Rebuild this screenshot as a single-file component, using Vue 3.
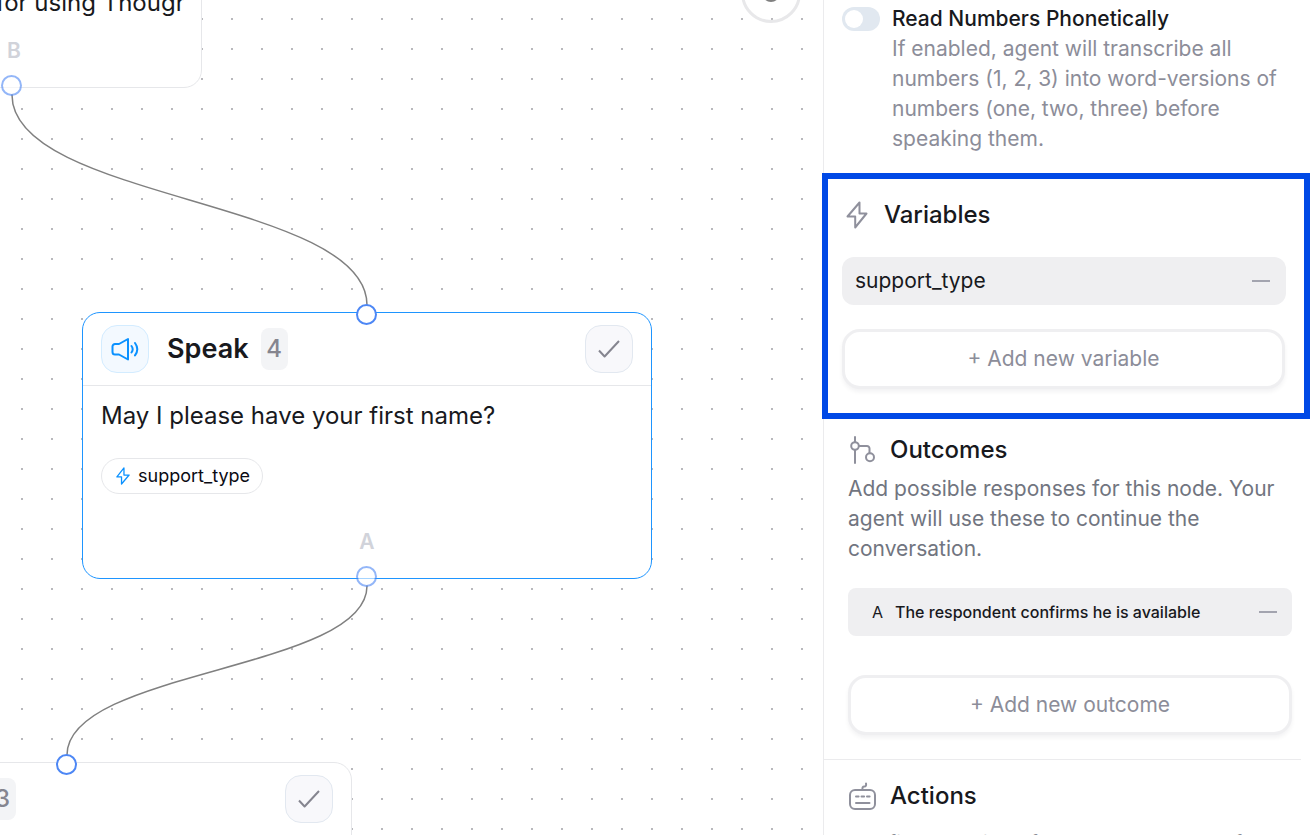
<script setup>
import { ref } from 'vue'

const readPhonetically = ref(false)
const variables = ref(['support_type'])
const outcomes = ref([{ key: 'A', text: 'The respondent confirms he is available' }])
</script>

<template>
  <div class="app">
    <main class="canvas">
      <svg class="edges" aria-hidden="true">
        <path d="M12 95C12 200 367 200 367 305" />
        <path d="M367 586C367 670 67 670 67 755" />
      </svg>

      <button class="zoom-button" aria-label="Recenter">
        <svg width="24" height="24" viewBox="0 0 24 24"><circle cx="12" cy="12" r="8" /></svg>
      </button>

      <article class="node node-intro">
        <p class="node-text clipped">for using Thoughtly</p>
        <span class="port-label">B</span>
        <span class="handle source"></span>
      </article>

      <article class="node node-speak">
        <span class="handle target"></span>
        <header class="node-head">
          <span class="tile tile-blue">
            <svg width="30" height="30" viewBox="0 0 30 30">
              <path d="M2.500 12.500a2.500 2.500 0 0 1 2.500-2.500H9l9-5v20.500L9 20.500H5a2.500 2.500 0 0 1-2.500-2.500z" />
              <path d="M21.500 12q2.400 3.200 0 6.500M25 9q4.600 6.200 0 12.400" />
            </svg>
          </span>
          <h2>Speak</h2>
          <span class="count">4</span>
          <button class="tile tile-check" aria-label="Done">
            <svg width="24" height="24" viewBox="0 0 24 24"><path d="M2 13.500l5.600 6L22 4" /></svg>
          </button>
        </header>
        <div class="node-body">
          <p class="node-text">May I please have your first name?</p>
          <span class="chip">
            <svg width="16" height="18" viewBox="0 0 22 28"><path d="M12.500 1.500L1.500 15.500h7.200v11L20.500 12.500h-8z" /></svg>
            support_type
          </span>
        </div>
        <span class="port-label">A</span>
        <span class="handle source"></span>
      </article>

      <article class="node node-next">
        <span class="handle target"></span>
        <header class="node-head">
          <span class="count">3</span>
          <button class="tile tile-check" aria-label="Done">
            <svg width="24" height="24" viewBox="0 0 24 24"><path d="M2 13.500l5.600 6L22 4" /></svg>
          </button>
        </header>
      </article>
    </main>

    <aside class="panel">
      <section class="setting">
        <input id="phonetic" v-model="readPhonetically" class="switch" type="checkbox" role="switch" />
        <div>
          <label for="phonetic">Read Numbers Phonetically</label>
          <p>If enabled, agent will transcribe all numbers (1, 2, 3) into word-versions of numbers (one, two, three) before speaking them.</p>
        </div>
      </section>

      <section class="variables">
        <h3>
          <svg width="30" height="28" viewBox="0 0 30 28"><path d="M17.500 1.500L5.500 15.500h7.700v11L24.500 12.500h-7z" /></svg>
          Variables
        </h3>
        <div v-for="name in variables" :key="name" class="row">
          <span>{{ name }}</span>
          <button class="remove" aria-label="Remove variable"></button>
        </div>
        <button class="add">+ Add new variable</button>
      </section>

      <section class="outcomes">
        <h3>
          <svg width="28" height="28" viewBox="0 0 28 28">
            <path d="M7 1v5M7 14v13M11 10H19a2.500 2.500 0 0 1 2.500 2.500V17" />
            <circle cx="7" cy="10" r="3.800" />
            <circle cx="22" cy="21.300" r="4" />
          </svg>
          Outcomes
        </h3>
        <p>Add possible responses for this node. Your agent will use these to continue the conversation.</p>
        <div v-for="o in outcomes" :key="o.key" class="row outcome-row">
          <span class="key">{{ o.key }}</span>
          <span>{{ o.text }}</span>
          <button class="remove" aria-label="Remove outcome"></button>
        </div>
        <button class="add">+ Add new outcome</button>
      </section>

      <section class="actions">
        <h3>
          <svg width="28" height="28" viewBox="0 0 28 28">
            <path d="M14.500 7.500Q14 4.500 16.300 4.500T18 1.500" />
            <rect x="2" y="8" width="25" height="19" rx="5" />
            <path d="M8 14.500h2.600M13.500 14.500h2.600M19 14.500h2.600M8 21h13.500" />
          </svg>
          Actions
        </h3>
        <p>Configure actions for your agent to perform</p>
      </section>
    </aside>
  </div>
</template>

<style>
body {
  margin: 0;
}
</style>

<style scoped>
.app {
  display: grid;
  grid-template-columns: minmax(0, 1fr) 488px;
  height: 100vh;
  overflow: hidden;
  background: #fff;
  color: #18191d;
  font-family: Inter, "Liberation Sans", sans-serif;
}
h2, h3, p {
  margin: 0;
}
button {
  font: inherit;
  padding: 0;
  border: 0;
  cursor: pointer;
}
svg {
  fill: none;
  stroke: currentColor;
  stroke-width: 2;
  stroke-linecap: round;
  stroke-linejoin: round;
  flex: none;
}

.canvas {
  position: relative;
  overflow: hidden;
  background: radial-gradient(circle, #b8b8bc 0 1px, transparent 1px) 7px 4px / 30px 30px;
}
.edges {
  position: absolute;
  inset: 0;
  width: 100%;
  height: 100%;
  color: #808080;
}
.edges path {
  stroke-width: 1.500;
}
.zoom-button {
  position: absolute;
  top: -37px;
  right: 22px;
  display: grid;
  place-items: center;
  width: 60px;
  height: 60px;
  border: 3px solid #e8e8ea;
  border-radius: 50%;
  background: transparent;
  color: #808080;
}

.node {
  position: absolute;
  box-sizing: border-box;
  border: 1px solid #e6e7ea;
  border-radius: 18px;
  background: #fff;
}
.node-intro {
  left: -22px;
  top: -30px;
  width: 224px;
  height: 118px;
  padding: 17px;
}
.node-speak {
  left: 82px;
  top: 312px;
  width: 570px;
  height: 267px;
  border-color: #1e95ff;
}
.node-next {
  left: -30px;
  top: 762px;
  width: 382px;
  height: 267px;
}
.node-head {
  display: flex;
  align-items: center;
  height: 72px;
  padding: 0 18px;
  border-bottom: 1px solid #e6e7ea;
}
.tile {
  display: grid;
  place-items: center;
  box-sizing: border-box;
  width: 48px;
  height: 48px;
  border: 1px solid #e2e8f0;
  border-radius: 16px;
}
.tile-blue {
  border-color: #d3ecff;
  background: #f3f9ff;
  color: #0a91ff;
}
.tile-check {
  margin-left: auto;
  background: #f8f8fb;
  color: #85858f;
}
.tile-check svg {
  stroke-linecap: butt;
}
h2 {
  margin-left: 18px;
  font-size: 27px;
  font-weight: 600;
  line-height: 30px;
}
.count {
  display: grid;
  place-items: center;
  width: 27px;
  height: 42px;
  border-radius: 8px;
  background: #f3f4f6;
  color: #85858f;
  font-size: 24px;
  font-weight: 500;
  line-height: 30px;
}
h2 + .count {
  margin-left: 12px;
}
.node-body {
  display: flex;
  flex-direction: column;
  align-items: flex-start;
  gap: 27px;
  padding: 15px 18px;
}
.node-text {
  font-size: 24px;
  line-height: 30px;
}
.clipped {
  overflow: hidden;
  white-space: nowrap;
}
.chip {
  display: flex;
  align-items: center;
  gap: 7px;
  box-sizing: border-box;
  height: 36px;
  padding: 0 12px 0 13px;
  border: 1px solid #e6e7ea;
  border-radius: 18px;
  color: #0b0b14;
  font-size: 18px;
  line-height: 24px;
}
.chip svg {
  color: #0a91ff;
}
.port-label {
  position: absolute;
  bottom: 21px;
  left: 0;
  right: 0;
  color: #d1d3da;
  font-size: 21px;
  font-weight: 600;
  line-height: 30px;
  text-align: center;
}
.handle {
  position: absolute;
  left: 50%;
  box-sizing: border-box;
  width: 21px;
  height: 21px;
  margin-left: -11px;
  border: 2px solid #4d87f5;
  border-radius: 50%;
  background: #fff;
}
.target {
  top: -9px;
}
.source {
  bottom: -9px;
  opacity: 0.600;
}
.node-intro .port-label {
  left: 28px;
  right: auto;
}
.node-intro .handle {
  left: 33px;
}
.node-next .handle {
  left: 96px;
}

.panel {
  box-sizing: border-box;
  position: relative;
  padding-top: 4px;
  border-left: 1px solid #ebebed;
  background: #fff;
  font-size: 21px;
  line-height: 30px;
}
.setting {
  display: flex;
  gap: 12px;
  padding: 0 18px 19px;
}
.setting label {
  font-weight: 500;
}
.setting p {
  color: #8c8d99;
}
.switch {
  appearance: none;
  flex: none;
  width: 38px;
  height: 24px;
  margin: 3px 0 0;
  padding: 3px;
  border-radius: 12px;
  background: #e1e8f0;
  box-sizing: border-box;
}
.switch::before {
  content: "";
  display: block;
  width: 18px;
  height: 18px;
  border-radius: 50%;
  background: #fff;
}
.switch:checked {
  background: #0a91ff;
}
.switch:checked::before {
  margin-left: auto;
}
h3 {
  display: flex;
  align-items: center;
  gap: 14px;
  font-size: 24px;
  font-weight: 500;
  line-height: 30px;
}
h3 svg {
  color: #8f909c;
}
.variables {
  position: relative;
  padding: 27px 26px 30px 18px;
}
.variables::after {
  content: "";
  position: absolute;
  inset: 0 1px 0 -2px;
  border: 6px solid #0049e6;
  pointer-events: none;
}
.variables h3 {
  gap: 12px;
  margin-bottom: 27px;
}
.row {
  display: flex;
  align-items: center;
  height: 48px;
  padding: 0 14px 0 13px;
  border-radius: 12px;
  background: #efeff1;
}
.variables .row {
  margin: 0 -1px 24px 0;
  padding-right: 15px;
}
.remove {
  display: grid;
  align-items: center;
  width: 20px;
  height: 30px;
  margin-left: auto;
  background: none;
}
.remove::before {
  content: "";
  height: 2px;
  margin: 0 1px;
  background: #a3a4af;
}
.add {
  display: block;
  box-sizing: border-box;
  width: 100%;
  height: 60px;
  border: 3px solid #efeff1;
  border-radius: 18px;
  background: #fff;
  box-shadow: 0 3px 4px rgba(20, 20, 40, 0.050);
  color: #8c8d99;
}
.outcomes {
  padding: 16px 19px 24px 24px;
}
.outcomes p {
  margin: 9px 0 24px;
  color: #717580;
}
.outcome-row {
  gap: 12px;
  margin-bottom: 39px;
  padding: 0 14px 0 24px;
  border-radius: 8px;
  font-size: 16px;
  font-weight: 500;
}
.key {
  font-weight: 400;
}
.actions {
  margin-right: 10px;
  padding: 21px 9px 0 24px;
  border-top: 1px solid #ebebed;
}
.actions p {
  margin-top: 18px;
  color: #717580;
  white-space: nowrap;
}
</style>
